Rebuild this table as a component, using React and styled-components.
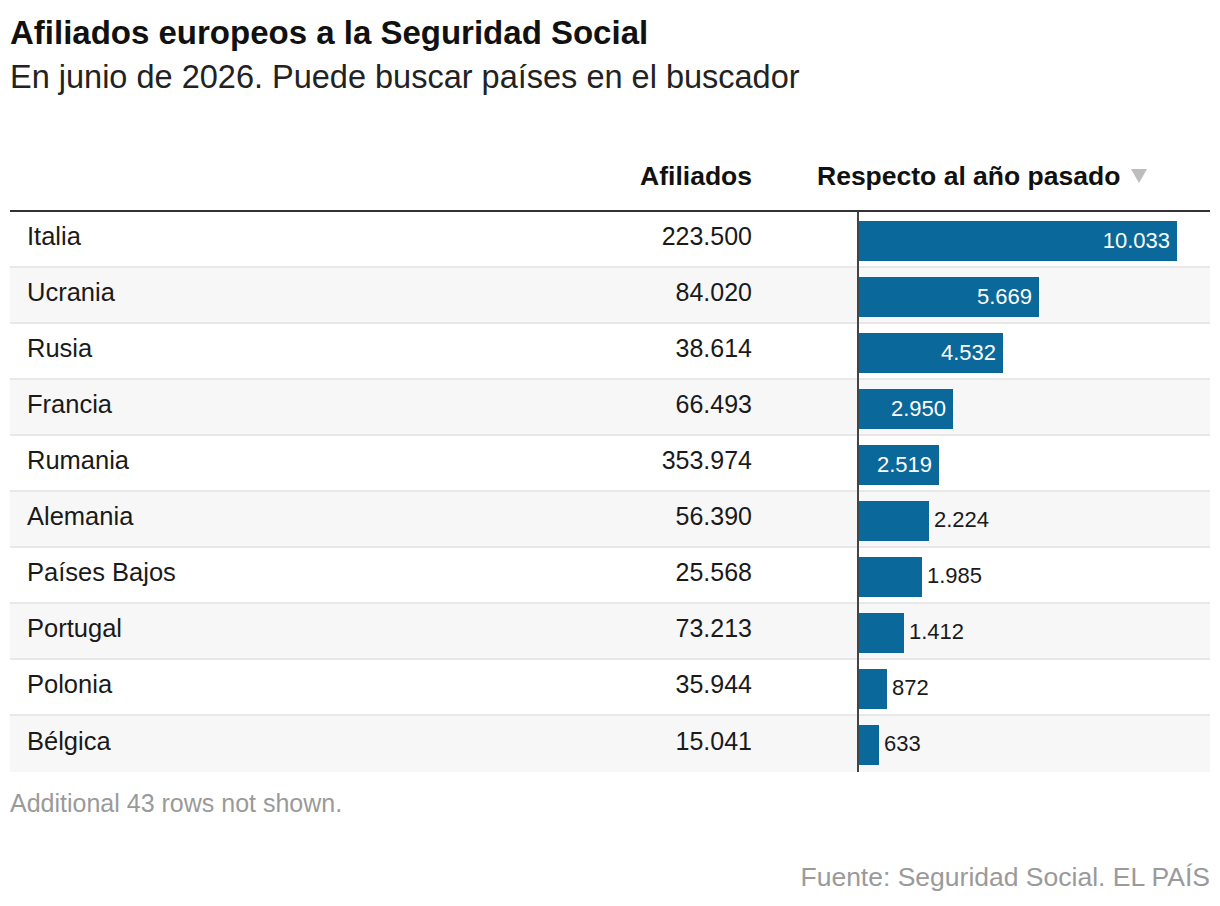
import React from 'react'
import styled, { createGlobalStyle } from 'styled-components'

const rows = [
  { name: 'Italia', total: '223.500', diff: 10033 },
  { name: 'Ucrania', total: '84.020', diff: 5669 },
  { name: 'Rusia', total: '38.614', diff: 4532 },
  { name: 'Francia', total: '66.493', diff: 2950 },
  { name: 'Rumania', total: '353.974', diff: 2519 },
  { name: 'Alemania', total: '56.390', diff: 2224 },
  { name: 'Países Bajos', total: '25.568', diff: 1985 },
  { name: 'Portugal', total: '73.213', diff: 1412 },
  { name: 'Polonia', total: '35.944', diff: 872 },
  { name: 'Bélgica', total: '15.041', diff: 633 }
]

const MAX = 10033
const BAR_MAX = 318

const fmt = n => n.toLocaleString('de-DE')

const GlobalStyle = createGlobalStyle`
  body {
    margin: 0;
    background: #fff;
    font-family: "Liberation Sans", Arial, sans-serif;
    color: #1a1a1a;
  }
`

const Page = styled.div`
  padding: 13px 10px 0;
  width: 1200px;
`

const Title = styled.h1`
  margin: 0;
  font-weight: 700;
  font-size: 33px;
  line-height: 40px;
  color: #111;
`

const Subtitle = styled.p`
  margin: 4px 0 0;
  font-size: 32.5px;
  line-height: 40px;
  color: #222;
`

const Table = styled.div`
  margin-top: 45px;
`

const HeaderRow = styled.div`
  display: grid;
  grid-template-columns: 1fr 200px 458px;
  height: 68px;
  align-items: center;
  border-bottom: 2px solid #333;
`

const HeadCell = styled.div`
  font-weight: 700;
  font-size: 26.5px;
  color: #111;
  padding-left: ${p => p.$pad || 0}px;
  display: flex;
  align-items: center;
  justify-content: ${p => (p.$right ? 'flex-end' : 'flex-start')};
`

const SortArrow = styled.span`
  margin-left: 11px;
  width: 0;
  height: 0;
  border-left: 8px solid transparent;
  border-right: 8px solid transparent;
  border-top: 14px solid #bdbdbd;
`

const Row = styled.div`
  display: grid;
  grid-template-columns: 1fr 200px 458px;
  height: 56px;
  box-sizing: border-box;
  align-items: stretch;
  background: ${p => (p.$alt ? '#f7f7f7' : '#fff')};
  border-bottom: ${p => (p.$last ? 'none' : '2px solid #e8e8e8')};
`

const Name = styled.div`
  padding: 0 0 6px 17px;
  display: flex;
  align-items: center;
  font-size: 25.5px;
  color: #1a1a1a;
`

const Total = styled.div`
  padding-bottom: 6px;
  display: flex;
  align-items: center;
  justify-content: flex-end;
  font-size: 25px;
  color: #1a1a1a;
`

const BarCell = styled.div`
  padding-left: 106px;
  display: flex;
`

const Track = styled.div`
  flex: 1;
  border-left: 2px solid #444;
  margin-left: -1px;
  margin-bottom: ${p => (p.$last ? 0 : -2)}px;
  display: flex;
  align-items: center;
`

const Bar = styled.div`
  height: 40px;
  margin-top: ${p => (p.$last ? 0 : 2)}px;
  background: #0a689b;
  display: flex;
  align-items: center;
  justify-content: flex-end;
  box-sizing: border-box;
  padding-right: 7px;
`

const Label = styled.span`
  font-size: 22px;
  color: ${p => (p.$inside ? '#fff' : '#1a1a1a')};
  margin-left: ${p => (p.$inside ? 0 : 5)}px;
`

const Note = styled.div`
  margin-top: 17px;
  font-size: 25px;
  color: #9a9a9a;
`

const Source = styled.div`
  margin-top: 44px;
  text-align: right;
  font-size: 26.5px;
  color: #9a9a9a;
`

export default function App() {
  return (
    <Page>
      <GlobalStyle />
      <Title>Afiliados europeos a la Seguridad Social</Title>
      <Subtitle>En junio de 2026. Puede buscar países en el buscador</Subtitle>
      <Table>
        <HeaderRow>
          <div />
          <HeadCell $right>Afiliados</HeadCell>
          <HeadCell $pad={65}>
            Respecto al año pasado
            <SortArrow />
          </HeadCell>
        </HeaderRow>
        {rows.map((r, i) => {
          const w = Math.round((r.diff / MAX) * BAR_MAX)
          const inside = r.diff >= 2500
          const last = i === rows.length - 1
          return (
            <Row key={r.name} $alt={i % 2 === 1} $last={last}>
              <Name>{r.name}</Name>
              <Total>{r.total}</Total>
              <BarCell>
                <Track $last={last}>
                  <Bar style={{ width: w }}>
                    {inside && <Label $inside>{fmt(r.diff)}</Label>}
                  </Bar>
                  {!inside && <Label>{fmt(r.diff)}</Label>}
                </Track>
              </BarCell>
            </Row>
          )
        })}
      </Table>
      <Note>Additional 43 rows not shown.</Note>
      <Source>Fuente: Seguridad Social. EL PAÍS</Source>
    </Page>
  )
}
